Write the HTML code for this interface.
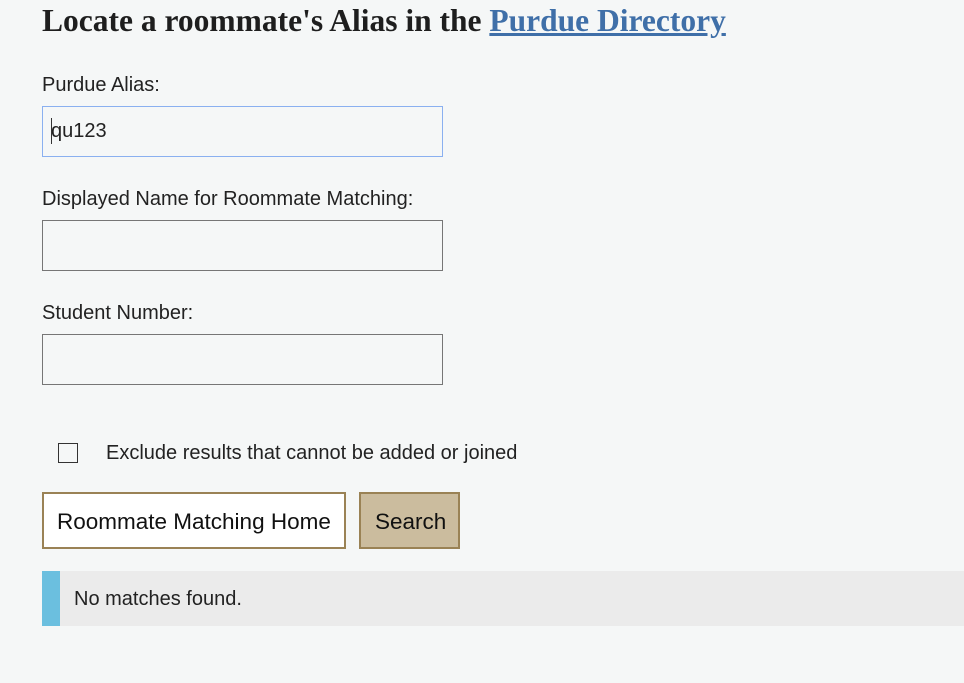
<!DOCTYPE html>
<html><head><style>
body{margin:0;width:964px;height:683px;background:#f5f7f7;position:relative;overflow:hidden;font-family:"Liberation Sans",sans-serif;color:#222}
.a{position:absolute;white-space:nowrap}
h1{position:absolute;left:42px;top:3px;margin:0;font:bold 31.5px "Liberation Serif",serif;color:#1e1e1e;white-space:nowrap}
h1 a{color:#3f6fa8;text-decoration:underline}
.lbl{font-size:20px;color:#222}
.inp{position:absolute;left:42px;width:399px;height:49px;border:1px solid #767676;background:#f5f7f7}
.btn{position:absolute;top:492px;height:53px;border:2px solid #9a8255;font-size:22.5px;line-height:55px;box-sizing:content-box;color:#111}
</style></head><body>
<h1>Locate a roommate's Alias in the <a>Purdue Directory</a></h1>
<div class="a lbl" style="left:42px;top:74px">Purdue Alias:</div>
<div class="inp" style="top:106px;border-color:#8ab0f0;"></div>
<div class="a" style="left:51px;top:120px;font-size:20px">qu123</div>
<div class="a" style="left:51px;top:118px;width:1px;height:26px;background:#333"></div>
<div class="a lbl" style="left:42px;top:188px">Displayed Name for Roommate Matching:</div>
<div class="inp" style="top:220px"></div>
<div class="a lbl" style="left:42px;top:302px">Student Number:</div>
<div class="inp" style="top:334px"></div>
<div class="a" style="left:58px;top:443px;width:18px;height:18px;border:1px solid #333"></div>
<div class="a lbl" style="left:106px;top:442px">Exclude results that cannot be added or joined</div>
<div class="btn" style="left:42px;width:287px;padding-left:13px;background:#fff">Roommate Matching Home</div>
<div class="btn" style="left:359px;width:83px;padding-left:14px;background:#cbbc9e">Search</div>
<div class="a" style="left:42px;top:571px;width:922px;height:55px;background:#ebebeb"></div>
<div class="a" style="left:42px;top:571px;width:18px;height:55px;background:#6bbfdf"></div>
<div class="a lbl" style="left:74px;top:588px">No matches found.</div>
</body></html>
